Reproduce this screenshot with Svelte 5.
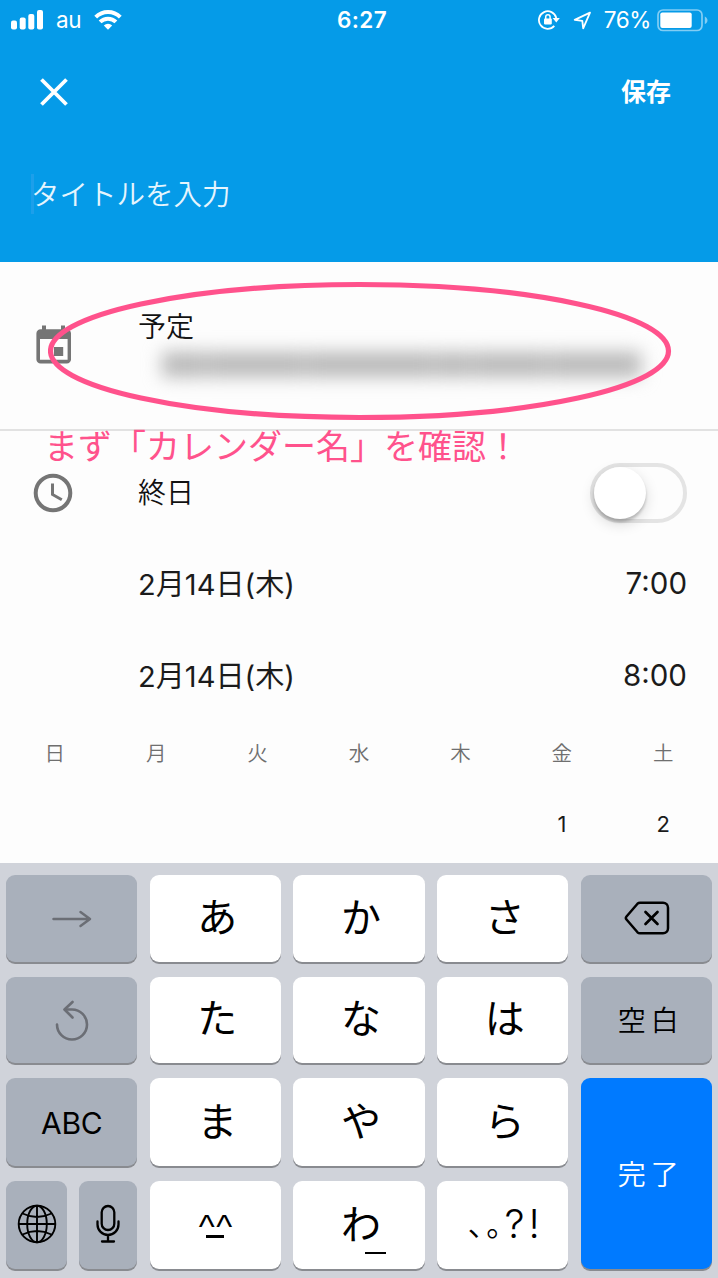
<script>
  let title = "";
  let allDay = false;

  const times = [
    { date: "2月14日(木)", time: "7:00" },
    { date: "2月14日(木)", time: "8:00" },
  ];

  const weekdays = ["日", "月", "火", "水", "木", "金", "土"];
  const days = ["", "", "", "", "", "1", "2"];

  // widths of the smudges that stand in for the hidden account name
  const smudges = [44, 98, 128, 36, 76, 92];
</script>

<div class="screen">
  <header>
    <div class="status">
      <div class="status-left">
        <svg width="33" height="20" viewBox="0 0 33 20" fill="#fff">
          <rect x="0" y="10.5" width="6" height="9" rx="2" />
          <rect x="8.7" y="7.5" width="6" height="12" rx="2" />
          <rect x="17.3" y="4" width="6" height="15.5" rx="2" />
          <rect x="26" y="0" width="6" height="19.5" rx="2" />
        </svg>
        <span class="carrier">au</span>
        <svg class="wifi" width="28" height="20" viewBox="0 0 28 20" fill="none" stroke="#fff" stroke-width="4">
          <path d="M1.7 7.1a17.4 17.4 0 0 1 24.6 0" />
          <path d="M6.1 11.9a11.2 11.2 0 0 1 15.8 0" />
          <path d="M14 19.7l-4.2-4.2a6 6 0 0 1 8.4 0z" fill="#fff" stroke="none" />
        </svg>
      </div>
      <span class="clock">6:27</span>
      <div class="status-right">
        <svg width="22" height="20" viewBox="0 0 22 20" fill="none" stroke="#fff" stroke-width="1.8">
          <path d="M18.3 8A8.8 8.8 0 1 0 16.3 15.9" />
          <path d="M14.6 8h7.2l-3.5 4.4z" fill="#fff" stroke="none" />
          <rect x="6" y="8.6" width="7.8" height="5.8" rx="0.8" fill="#fff" stroke="none" />
          <path d="M7.7 9V7a2.2 2.2 0 0 1 4.4 0v2" stroke-width="1.5" />
        </svg>
        <svg class="arrow" width="19" height="19" viewBox="0 0 19 19" fill="none" stroke="#fff" stroke-width="1.8" stroke-linejoin="round">
          <path d="M17 1.6L1.7 8.9l7.6.9.9 7.5z" />
        </svg>
        <span class="percent">76%</span>
        <svg width="52" height="23" viewBox="0 0 52 23">
          <rect x="1" y="1" width="44" height="20.5" rx="5" fill="none" stroke="#fff" stroke-opacity=".5" stroke-width="1.7" />
          <rect x="3.3" y="3.4" width="31.4" height="15.6" rx="2" fill="#fff" />
          <path d="M47.8 7.4c3.6 1.7 3.6 6 0 7.7z" fill="#fff" fill-opacity=".5" />
        </svg>
      </div>
    </div>

    <div class="actions">
      <button class="close" aria-label="close">
        <svg width="28" height="28" viewBox="0 0 28 28" stroke="#fff" stroke-width="3.8">
          <path d="M1.5 1.5l25 25M26.5 1.5l-25 25" />
        </svg>
      </button>
      <button class="save">保存</button>
    </div>

    <div class="title">
      <input type="text" placeholder="タイトルを入力" bind:value={title} />
    </div>
  </header>

  <section class="calendar">
    <svg class="icon" width="36" height="40" viewBox="0 0 36 40">
      <path fill="#757575" fill-rule="evenodd" d="M4.6 4.2H6V.4h4v3.8h15V.4h4v3.8h1.8a4.2 4.2 0 0 1 4.2 4.2v26a4.2 4.2 0 0 1-4.2 4.2H4.6a4.2 4.2 0 0 1-4.2-4.2v-26a4.2 4.2 0 0 1 4.2-4.2zM4 14v20.7h27.6V14z" />
      <rect x="18" y="22" width="9.2" height="9" fill="#757575" />
    </svg>
    <div class="calendar-text">
      <span>予定</span>
      <div class="hidden-account">
        {#each smudges as width}
          <i style="width: {width}px"></i>
        {/each}
      </div>
    </div>
    <svg class="ring" width="624" height="140" viewBox="0 0 624 140">
      <ellipse cx="311.5" cy="70" rx="309" ry="66.5" fill="none" stroke="#ff528c" stroke-width="5.2" />
    </svg>
    <p class="note">まず「カレンダー名」を確認！</p>
  </section>

  <section class="all-day">
    <svg class="icon" width="40" height="40" viewBox="0 0 40 40" fill="none" stroke="#757575" stroke-width="4">
      <circle cx="20" cy="20" r="17.3" />
      <path d="M19.5 10.5v11l9.3 5.3" stroke-width="3" />
    </svg>
    <span>終日</span>
    <button
      class="switch"
      class:on={allDay}
      aria-label="終日"
      on:click={() => (allDay = !allDay)}
    >
      <i class="knob"></i>
    </button>
  </section>

  {#each times as row}
    <div class="time-row">
      <span class="date">{row.date}</span>
      <span class="time">{row.time}</span>
    </div>
  {/each}

  <div class="week names">
    {#each weekdays as name}
      <span>{name}</span>
    {/each}
  </div>
  <div class="week days">
    {#each days as day}
      <span>{day}</span>
    {/each}
  </div>

  <div class="keyboard">
    <button class="key gray" aria-label="next">
      <svg class="next" width="40" height="18" viewBox="0 0 40 18" fill="none" stroke="#6b6e75" stroke-width="2.5" stroke-linecap="round" stroke-linejoin="round">
        <path d="M1.5 9h36M28.5 2l9.5 7-9.500 7" />
      </svg>
    </button>
    <button class="key kana">あ</button>
    <button class="key kana">か</button>
    <button class="key kana">さ</button>
    <button class="key gray" aria-label="delete">
      <svg class="delete" width="46" height="34" viewBox="0 0 46 34" fill="none" stroke="#000" stroke-width="2.5" stroke-linecap="round" stroke-linejoin="round">
        <path d="M16 1.7h23a5 5 0 0 1 5 5v20.6a5 5 0 0 1-5 5H16q-1.5 0-2.5-1L2.5 18.5q-1.3-1.5 0-3L13.5 2.7q1-1 2.5-1z" />
        <path d="M21.5 11l12 12M33.5 11l-12 12" stroke-width="2.7" />
      </svg>
    </button>

    <button class="key gray" aria-label="undo">
      <svg class="undo" width="34" height="41" viewBox="0 0 34 41" fill="none" stroke="#6b6e75" stroke-width="2.6" stroke-linecap="round" stroke-linejoin="round">
        <path d="M2 24.5a15 15 0 1 0 15-15H10" />
        <path d="M17.5 2L9.5 9.5l8 8" />
      </svg>
    </button>
    <button class="key kana">た</button>
    <button class="key kana">な</button>
    <button class="key kana">は</button>
    <button class="key gray word">空白</button>

    <button class="key gray latin">ABC</button>
    <button class="key kana">ま</button>
    <button class="key kana">や</button>
    <button class="key kana">ら</button>
    <button class="key blue word">完了</button>

    <div class="pair">
      <button class="key gray" aria-label="keyboard">
        <svg width="40" height="40" viewBox="0 0 40 40" fill="none" stroke="#000" stroke-width="1.9">
          <circle cx="20" cy="20" r="18.3" />
          <ellipse cx="20" cy="20" rx="9.8" ry="18.3" />
          <path d="M20 1.7v36.6M1.7 20h36.6M5.5 9.5q14.5 7 29 0M5.5 30.5q14.5-7 29 0" />
        </svg>
      </button>
      <button class="key gray" aria-label="voice">
        <svg width="24" height="40" viewBox="0 0 24 40" fill="none" stroke="#000" stroke-width="2.3" stroke-linecap="round">
          <rect x="5.7" y="2" width="12.6" height="24" rx="6.3" />
          <path d="M1.5 17.5v3a10.5 10.5 0 0 0 21 0v-3M12 31v6.5M6 37.5h12" />
        </svg>
      </button>
    </div>
    <button class="key face"><span>^^</span><i></i></button>
    <button class="key kana wa">わ<i></i></button>
    <button class="key marks">
      <span class="comma">､</span><span class="stop">｡</span><span>?</span><span>!</span>
    </button>
  </div>
</div>

<style>
  :global(body) {
    margin: 0;
  }

  .screen {
    display: flex;
    flex-direction: column;
    width: 718px;
    height: 1278px;
    overflow: hidden;
    background-color: #fdfdfd;
    color: #1b1b1b;
    font-family: Inter, "Noto Sans CJK JP", sans-serif;
    font-size: 28px;
    font-weight: 350;
  }

  button {
    padding: 0;
    border: none;
    background: none;
    color: inherit;
    font: inherit;
  }

  svg {
    display: block;
    flex: none;
  }

  header {
    box-sizing: border-box;
    height: 262px;
    background-color: #059be8;
    color: white;
  }

  .status {
    display: grid;
    grid-template-columns: 1fr auto 1fr;
    align-items: center;
    height: 40px;
    padding: 0 11px;
  }

  .status-left,
  .status-right {
    display: flex;
    align-items: center;
  }

  .status-right {
    justify-content: flex-end;
    margin-right: -2px;
  }

  .carrier {
    margin: 0 13px 0 12px;
    padding-bottom: 1px;
    font-size: 22.5px;
    font-weight: 400;
    letter-spacing: -0.3px;
  }

  .clock {
    margin-left: 6px;
    padding-bottom: 1px;
    font-size: 22.5px;
    font-weight: 600;
    letter-spacing: 0.4px;
  }

  .arrow {
    margin: 0 12px 0 13px;
  }

  .percent {
    margin-right: 6px;
    padding-bottom: 1px;
    font-size: 22.5px;
    font-weight: 400;
    letter-spacing: -0.4px;
  }

  .actions {
    display: flex;
    justify-content: space-between;
    align-items: center;
    height: 104px;
    padding: 0 47px 0 40px;
  }

  .save {
    padding-bottom: 4px;
    font-size: 25px;
    font-weight: 700;
  }

  .title {
    display: flex;
    align-items: center;
    height: 100px;
    padding-left: 31px;
  }

  .title input {
    width: 500px;
    height: 40px;
    padding: 0;
    border: none;
    border-left: 3px solid #1d9fea;
    background: none;
    color: white;
    font: inherit;
    font-size: 28.5px;
    text-indent: -3px;
  }

  .title input::placeholder {
    color: #e6f5fd;
    opacity: 1;
  }

  .calendar {
    position: relative;
    display: flex;
    box-sizing: border-box;
    height: 169px;
    padding: 63px 36px 0;
    border-bottom: 2px solid #e2e2e2;
  }

  .calendar-text {
    margin: -19px 0 0 66px;
  }

  .calendar-text span {
    display: block;
    line-height: 42px;
    color: #111;
  }

  .hidden-account {
    display: flex;
    gap: 1px;
    margin: 4px 0 0 24px;
    filter: blur(9px);
  }

  .hidden-account i {
    height: 25px;
    background-color: #b8b8b8;
  }

  .ring {
    position: absolute;
    top: 19px;
    left: 48px;
  }

  .note {
    position: absolute;
    top: 160px;
    left: 44px;
    margin: 0;
    color: #ff528c;
    font-size: 34px;
    font-weight: 400;
    line-height: 50px;
    white-space: nowrap;
  }

  .all-day {
    display: flex;
    align-items: center;
    box-sizing: border-box;
    height: 106px;
    padding: 17px 31px 0 33px;
  }

  .all-day span {
    flex: 1;
    margin-left: 65px;
    padding-bottom: 4px;
    color: #111;
  }

  .switch {
    display: flex;
    box-sizing: border-box;
    width: 97px;
    height: 60px;
    border: 4px solid #e4e4e4;
    border-radius: 30px;
  }

  .switch.on {
    justify-content: flex-end;
    background-color: #059be8;
  }

  .knob {
    width: 52px;
    height: 52px;
    border-radius: 50%;
    background-color: white;
    box-shadow:
      0 5px 14px rgba(0, 0, 0, 0.15),
      0 3px 3px rgba(0, 0, 0, 0.2);
  }

  .time-row {
    display: flex;
    align-items: center;
    justify-content: space-between;
    height: 92px;
    padding: 0 31px 0 138px;
  }

  .date {
    padding-bottom: 3px;
    font-size: 29.1px;
    font-weight: 390;
  }

  .time {
    font-size: 29.5px;
    font-weight: 400;
  }

  .week {
    display: grid;
    grid-template-columns: repeat(7, 1fr);
    padding: 0 4px;
    text-align: center;
  }

  .names {
    height: 66px;
    line-height: 66px;
    color: #6f6f6f;
    font-size: 20.5px;
  }

  .days {
    height: 76px;
    line-height: 75px;
    font-size: 22px;
    font-weight: 400;
  }

  .keyboard {
    display: grid;
    flex: 1;
    grid-template-columns: repeat(5, 1fr);
    grid-template-rows: 86.5px 86.5px 88px 88px;
    row-gap: 15px;
    column-gap: 12.4px;
    padding: 12px 6px 0;
    background-color: #d0d3da;
    color: black;
    font-size: 40px;
  }

  .key {
    display: flex;
    align-items: center;
    justify-content: center;
    padding-bottom: 3px;
    border-radius: 9px;
    background-color: white;
    box-shadow: 0 2px 0 #898b90;
    font-weight: 400;
    line-height: 1;
  }

  .kana {
    padding: 0 0 1px 4px;
  }

  .gray {
    background-color: #a9b0bb;
  }

  .blue {
    grid-row: 3 / 5;
    grid-column: 5;
    background-color: #007aff;
    color: white;
  }

  .key.word {
    padding: 3px 0 0 9px;
    font-size: 28px;
    font-weight: 350;
    letter-spacing: 5px;
  }

  .key.latin {
    padding: 2px 0 0;
    font-size: 30px;
    font-weight: 380;
    letter-spacing: -0.4px;
  }

  .next {
    margin-top: 4px;
  }

  .delete {
    margin: 2px 0 0 1px;
  }

  .undo {
    margin-top: 5px;
  }

  .pair {
    display: grid;
    grid-template-columns: 61px 58px;
    justify-content: space-between;
  }

  .face {
    flex-direction: column;
    font-size: 34px;
    font-family: "Liberation Sans", sans-serif;
  }

  .face span {
    height: 25px;
    margin-left: 2px;
    letter-spacing: 1.5px;
  }

  .face i {
    width: 18px;
    height: 3px;
    margin-top: 1px;
    background-color: black;
  }

  .wa {
    position: relative;
  }

  .wa i {
    position: absolute;
    right: 39px;
    bottom: 15px;
    width: 21px;
    height: 2px;
    background-color: black;
  }

  .marks {
    gap: 4px;
    padding-left: 3px;
  }

  .marks span {
    font-weight: 350;
  }

  .comma,
  .stop {
    width: 14px;
    padding-top: 2px;
    font-size: 31px;
  }
</style>
